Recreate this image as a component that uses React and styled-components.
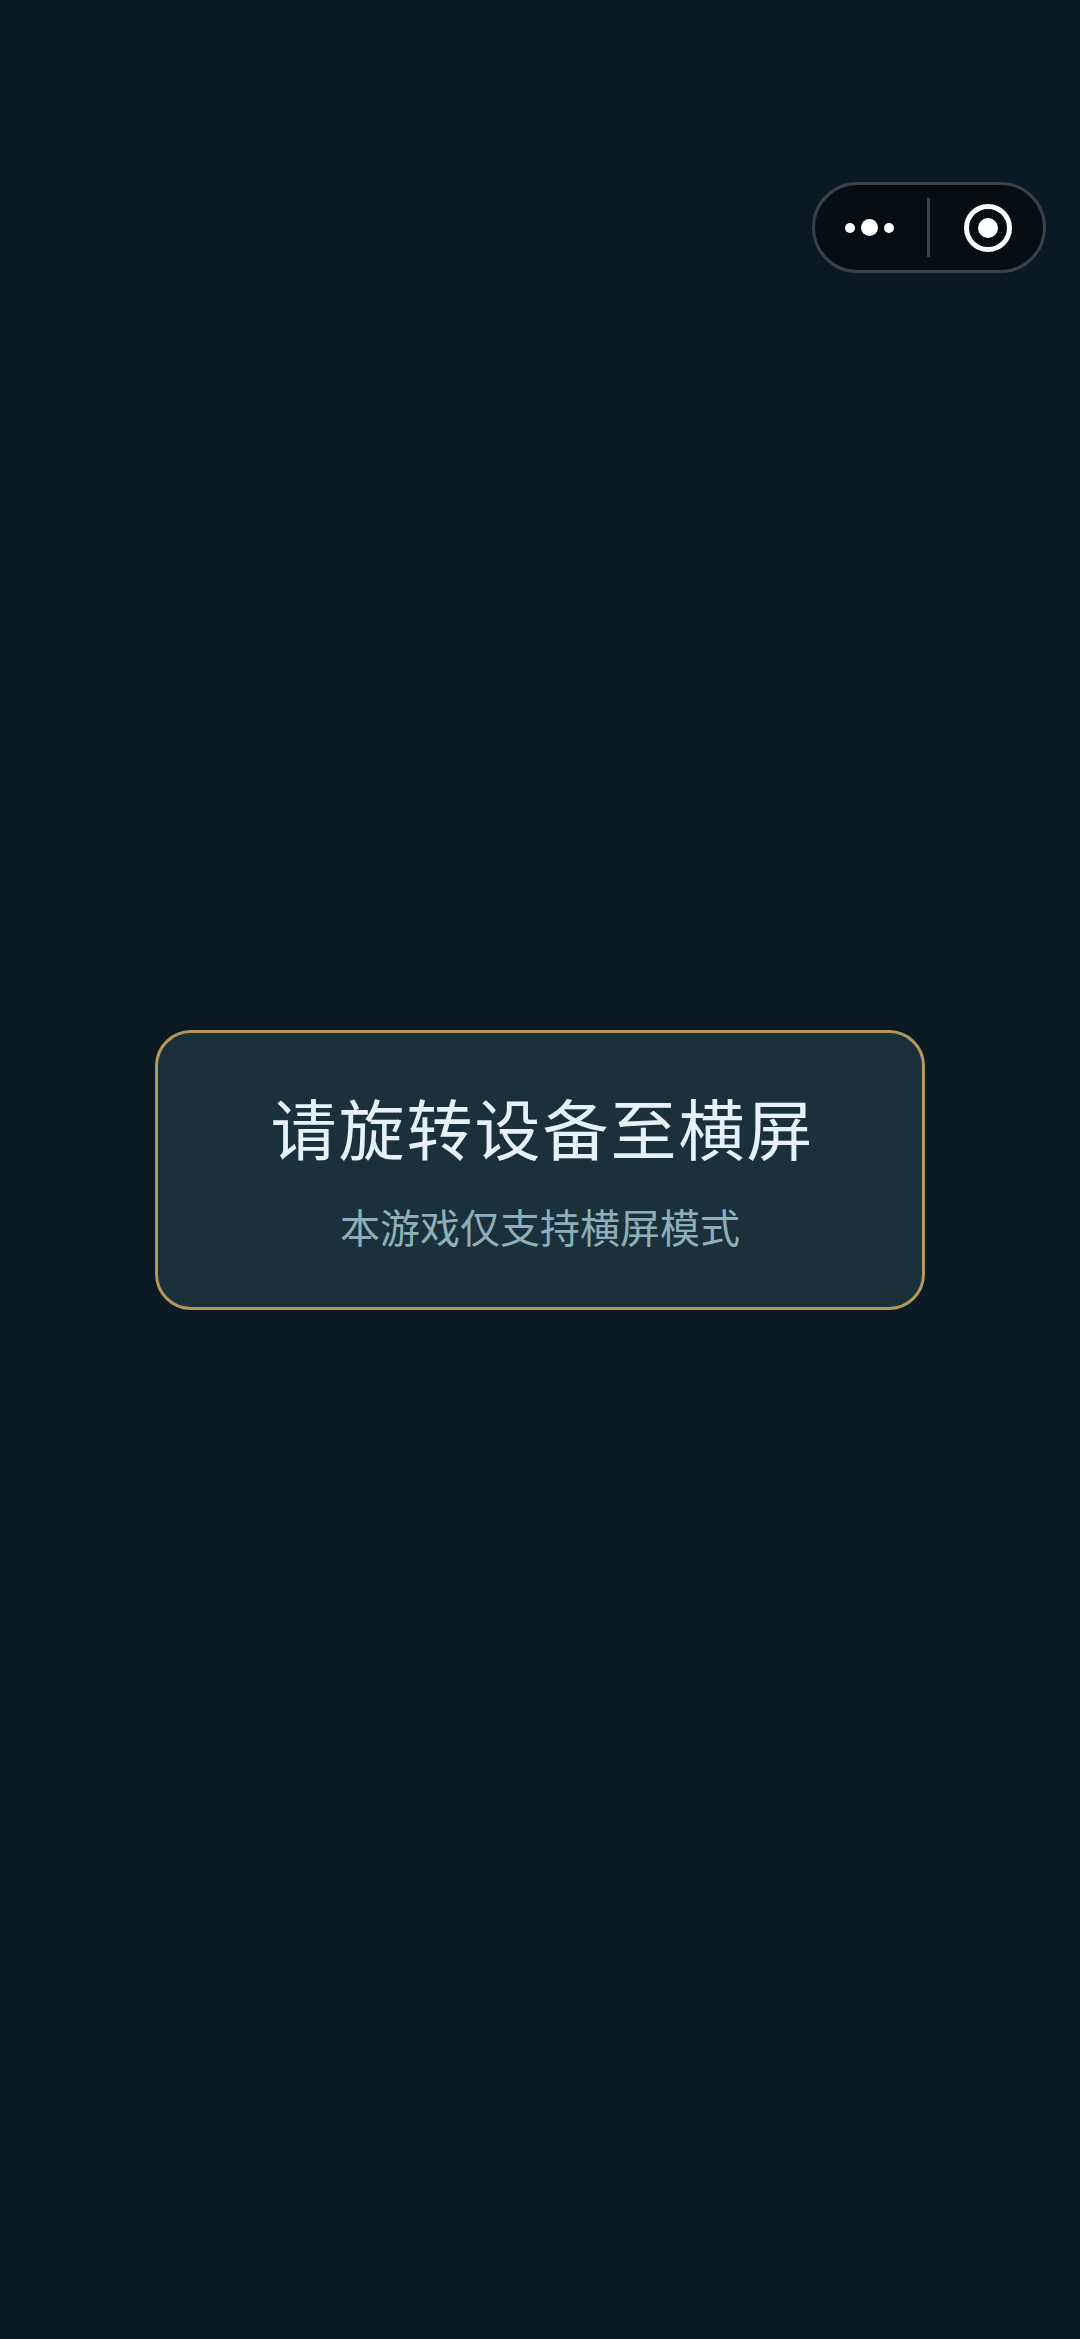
import styled, { createGlobalStyle } from "styled-components";

const GlobalStyle = createGlobalStyle`
  html, body {
    margin: 0;
    padding: 0;
    background-color: #0b1a22;
  }
  * {
    box-sizing: border-box;
  }
`;

export default function App() {
  return (
    <Page>
      <GlobalStyle />
      <Capsule>
        <MenuSide>
          <Dot />
          <Dot large />
          <Dot />
        </MenuSide>
        <Divider />
        <CloseSide>
          <svg width="50" height="50" viewBox="0 0 50 50">
            <circle cx="25" cy="25" r="21.5" fill="none" stroke="#ffffff" strokeWidth="5" />
            <circle cx="25" cy="25" r="10" fill="#ffffff" />
          </svg>
        </CloseSide>
      </Capsule>
      <Card>
        <Title>请旋转设备至横屏</Title>
        <Subtitle>本游戏仅支持横屏模式</Subtitle>
      </Card>
    </Page>
  );
}

const Page = styled.div`
  position: relative;
  width: 1080px;
  height: 2339px;
  background-color: #0b1a22;
  display: flex;
  justify-content: center;
  align-items: center;
  font-family: "Noto Sans CJK SC", "Noto Sans", sans-serif;
`;

const Capsule = styled.div`
  position: absolute;
  top: 182px;
  right: 34px;
  width: 234px;
  height: 91px;
  display: grid;
  grid-template-columns: 112px 3px 1fr;
  align-items: center;
  background-color: #070e13;
  border: 3px solid #3a4247;
  border-radius: 46px;
`;

const MenuSide = styled.div`
  display: flex;
  justify-content: center;
  align-items: center;
  gap: 6px;
  padding-right: 3px;
`;

const CloseSide = styled.div`
  display: flex;
  justify-content: center;
  align-items: center;
  padding-left: 3px;
`;

const Dot = styled.span`
  width: ${(props) => (props.large ? "17px" : "10px")};
  height: ${(props) => (props.large ? "17px" : "10px")};
  border-radius: 50%;
  background-color: #ffffff;
`;

const Divider = styled.div`
  width: 3px;
  height: 59px;
  background-color: #3a4247;
`;

const Card = styled.div`
  width: 770px;
  height: 280px;
  display: flex;
  flex-direction: column;
  align-items: center;
  background-color: #1a303b;
  border: 3px solid #b4975a;
  border-radius: 36px;
  padding-top: 55px;
`;

const Title = styled.h1`
  margin: 0;
  padding-left: 5px;
  font-size: 66px;
  font-weight: 400;
  line-height: 76px;
  letter-spacing: 2px;
  color: #e8f1f7;
`;

const Subtitle = styled.p`
  margin: 37px 0 0;
  font-size: 40px;
  font-weight: 400;
  line-height: 50px;
  color: #8db0b8;
`;
